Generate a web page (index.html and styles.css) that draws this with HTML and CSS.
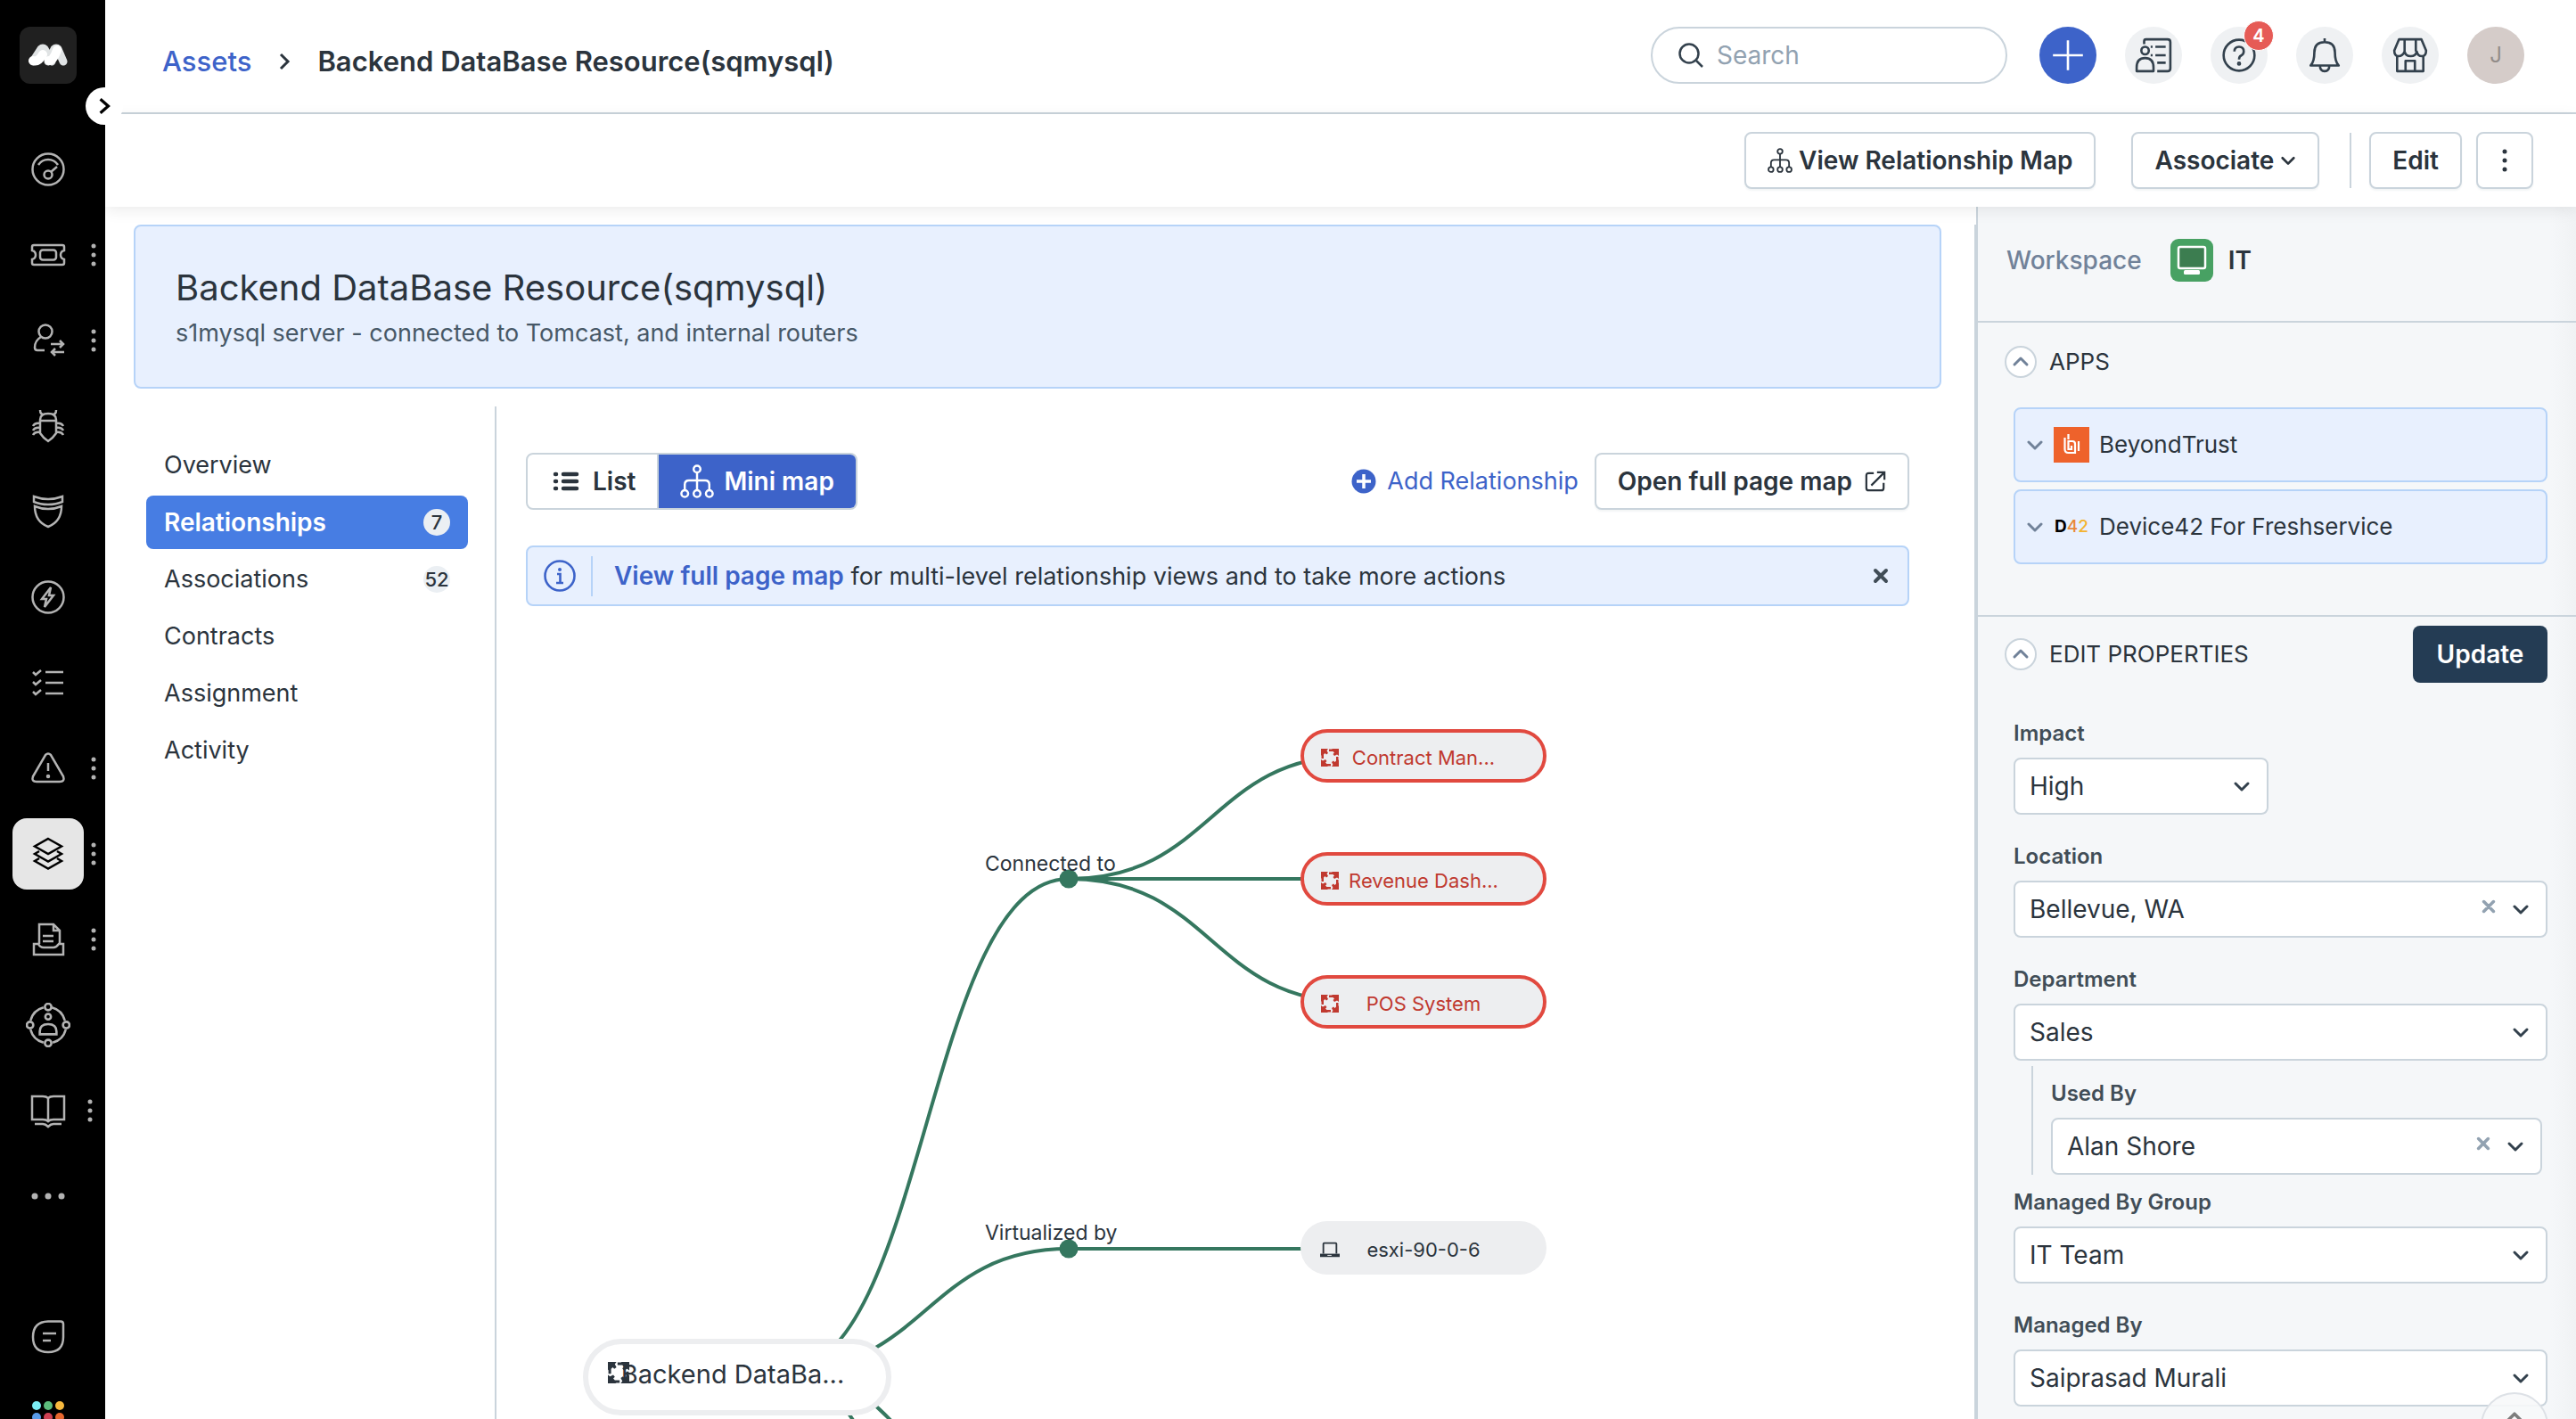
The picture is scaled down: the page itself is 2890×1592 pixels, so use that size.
FILE: index.html
```html
<!DOCTYPE html>
<html lang="en">
<head>
<meta charset="utf-8">
<title>Backend DataBase Resource(sqmysql)</title>
<link rel="stylesheet" href="styles.css">
</head>
<body>
<svg class="defs" aria-hidden="true">
  <symbol id="chev" viewBox="0 0 20 20"><path d="M3 7l7 7 7-7" fill="none" stroke="currentColor" stroke-width="3" stroke-linecap="round" stroke-linejoin="round"/></symbol>
  <symbol id="cross" viewBox="0 0 20 20"><path d="M4 4l12 12M16 4L4 16" fill="none" stroke="currentColor" stroke-width="4" stroke-linecap="round"/></symbol>
  <symbol id="tree" viewBox="0 0 40 40"><g fill="none" stroke="currentColor" stroke-width="2.6"><circle cx="20" cy="5.500" r="4"/><circle cx="5.500" cy="34.500" r="4"/><circle cx="20" cy="34.500" r="4"/><circle cx="34.500" cy="34.500" r="4"/><path d="M20 9.500v21M5.500 30.500V24q0-5 5-5h19q5 0 5 5v6.500"/></g></symbol>
  <symbol id="more" viewBox="0 0 8 28"><g fill="currentColor"><circle cx="4" cy="4" r="2.500"/><circle cx="4" cy="14" r="2.500"/><circle cx="4" cy="24" r="2.500"/></g></symbol>
  <symbol id="cycle" viewBox="0 0 20 20"><g fill="currentColor"><path id="cy" d="M0 0h8L6.500 2 8 5 6 6.500 4.500 5 3 6.500V11H.500V7L0 8z"/><path d="M0 0h8L6.500 2 8 5 6 6.500 4.500 5 3 6.500V11H.500V7L0 8z" transform="rotate(90 10 10)"/><path d="M0 0h8L6.500 2 8 5 6 6.500 4.500 5 3 6.500V11H.500V7L0 8z" transform="rotate(180 10 10)"/><path d="M0 0h8L6.500 2 8 5 6 6.500 4.500 5 3 6.500V11H.500V7L0 8z" transform="rotate(270 10 10)"/></g></symbol>
</svg>
<div class="app">
  <nav class="rail" aria-label="Main">
    <a class="logo" href="#" aria-label="Home"><svg viewBox="0 0 44 26" width="44" height="26"><path d="M5 20L14 6q2-2 4 0l8 14" fill="none" stroke="#e0e3e4" stroke-width="9" stroke-linecap="round" stroke-linejoin="round"/><path d="M22 20L29 6q2-2 4 0l6 14" fill="none" stroke="#e0e3e4" stroke-width="9" stroke-linecap="round" stroke-linejoin="round"/><path d="M5 19q6 2 11-7M23 19q5 0 9-12" fill="none" stroke="#fff" stroke-width="10" stroke-linecap="round"/></svg></a>
    <button class="expand" aria-label="Expand menu"><svg viewBox="0 0 20 20" width="22" height="22"><path d="M6 3l8 7-8 7" fill="none" stroke="#000" stroke-width="3"/></svg></button>
    <ul class="rail-list">
      <li><a href="#" aria-label="Dashboard"><svg viewBox="0 0 40 40"><circle cx="20" cy="20" r="17.500"/><path d="M9 15q4-6 11-6t11 6M23 23l7-6"/><circle cx="20" cy="26" r="4.500"/></svg></a></li>
      <li><a href="#" aria-label="Tickets"><svg viewBox="0 0 40 40"><path d="M4 9h32q2 0 2 2v4q-4 1-4 5t4 5v4q0 2-2 2H4q-2 0-2-2v-4q4-1 4-5t-4-5v-4q0-2 2-2z"/><rect x="11" y="14.500" width="18" height="11" rx="3"/></svg></a><svg class="dots" viewBox="0 0 8 28"><use href="#more"/></svg></li>
      <li><a href="#" aria-label="Requests"><svg viewBox="0 0 40 40"><circle cx="17" cy="10" r="7.500"/><path d="M12 16q-7 4-7 12 0 3 3 3h8M23 24h14m-4-4l4 4-4 4M38 33H24m4-4l-4 4 4 4"/></svg></a><svg class="dots" viewBox="0 0 8 28"><use href="#more"/></svg></li>
      <li><a href="#" aria-label="Problems"><svg viewBox="0 0 40 40"><path d="M11 13q0-7 9-7t9 7v15q-4 6-9 9-5-3-9-9zM11 14h18M11 2q0 5 4 5M29 2q0 5-4 5M11 17q-6-1-8 3M11 22q-6-1-8 3M11 27q-6-1-8 3M29 17q6-1 8 3M29 22q6-1 8 3M29 27q6-1 8 3"/></svg></a></li>
      <li><a href="#" aria-label="Changes"><svg viewBox="0 0 40 40"><path d="M4 3q8 3 16 3t16-3v6q-7 3-16 3T4 9zM5 14q7 3 15 3t15-3q0 17-15 23Q5 31 5 14z"/></svg></a></li>
      <li><a href="#" aria-label="Releases"><svg viewBox="0 0 40 40"><circle cx="20" cy="20" r="17.500"/><path d="M23 9L13 22h5l-2 9 10-13h-5z"/></svg></a></li>
      <li><a href="#" aria-label="Tasks"><svg viewBox="0 0 40 40"><path d="M3 8l3 3 6-5M3 19l3 3 6-5M3 30l3 3 6-5M17 8h20M17 20h20M17 32h20"/></svg></a></li>
      <li><a href="#" aria-label="Alerts"><svg viewBox="0 0 40 40"><path d="M17 5q3-3 6 0l14 24q2 6-4 6H7q-6 0-4-6zM20 14v9"/><circle cx="20" cy="29" r="1"/></svg></a><svg class="dots" viewBox="0 0 8 28"><use href="#more"/></svg></li>
      <li><a class="on" href="#" aria-label="Assets"><svg viewBox="0 0 40 40"><path d="M20 3l15 8.500-15 8.500-15-8.500zM10 17l-5 3 15 8.500L35 20l-5-3M10 25l-5 3 15 8.500L35 28l-5-3"/></svg></a><svg class="dots" viewBox="0 0 8 28"><use href="#more"/></svg></li>
      <li><a href="#" aria-label="Contracts"><svg viewBox="0 0 40 40"><path d="M10 25V3h16l7 7v15M26 3v7h7M14 16h12M14 22h12M9 25H4v12h33V25h-5q-3 4-6 4H15q-4 0-6-4z"/></svg></a><svg class="dots" viewBox="0 0 8 28"><use href="#more"/></svg></li>
      <li><a href="#" aria-label="Workload"><svg class="wide" viewBox="0 0 48 48"><path d="M28 5q11 3 14 14M43 29q-3 11-14 14M19 43Q8 40 5 29M5 19Q8 8 19 5"/><circle cx="24" cy="4.500" r="3.500"/><circle cx="24" cy="43.500" r="3.500"/><circle cx="4.500" cy="24" r="3.500"/><circle cx="43.500" cy="24" r="3.500"/><circle cx="24" cy="15" r="3"/><path d="M15 34v-3q0-8 9-8t9 8v3z"/></svg></a></li>
      <li><a href="#" aria-label="Solutions"><svg viewBox="0 0 40 40"><path d="M2 4h12q4 0 6 2 2-2 6-2h12v26H26q-4 0-6 2-2-2-6-2H2zM20 6v26M5 35h9q3 0 6 3 3-3 6-3h9"/></svg></a><svg class="dots near" viewBox="0 0 8 28"><use href="#more"/></svg></li>
      <li><a href="#" aria-label="More"><svg viewBox="0 0 40 40" class="fill"><circle cx="5" cy="20" r="3.500"/><circle cx="20" cy="20" r="3.500"/><circle cx="35" cy="20" r="3.500"/></svg></a></li>
    </ul>
    <div class="rail-foot">
      <a href="#" aria-label="Chat"><svg viewBox="0 0 40 40"><path d="M20 2.500h14q3 0 3 3V20q0 17-17 17T3 20 20 2.500zM14 16h15M14 24h9"/></svg></a>
      <a href="#" aria-label="Switch product"><svg viewBox="0 0 40 40" class="fill"><g><circle cx="7" cy="7" r="5" fill="#7aecf4"/><circle cx="20" cy="7" r="5" fill="#5dbd7c"/><circle cx="33" cy="7" r="5" fill="#f7b93e"/><circle cx="7" cy="20" r="5" fill="#5a9be8"/><circle cx="20" cy="20" r="5" fill="#cf4154"/><circle cx="33" cy="20" r="5" fill="#e8672f"/></g></svg></a>
    </div>
  </nav>

  <div class="page">
    <header class="top">
      <nav class="crumbs" aria-label="Breadcrumb"><a href="#">Assets</a><svg viewBox="0 0 20 20" width="20" height="20"><path d="M6 2l8 8-8 8" fill="none" stroke="#2b343d" stroke-width="3"/></svg><strong>Backend DataBase Resource(sqmysql)</strong></nav>
      <label class="search"><svg viewBox="0 0 30 30" width="30" height="30"><circle cx="13" cy="13" r="10.500" fill="none" stroke="#33414d" stroke-width="2.500"/><path d="M21 21l7 7" stroke="#33414d" stroke-width="2.500"/></svg><input type="search" placeholder="Search" aria-label="Search"></label>
      <div class="actions">
        <button class="round add" aria-label="New"><svg viewBox="0 0 40 40"><path d="M20 4v32M4 20h32"/></svg></button>
        <button class="round" aria-label="Feed"><svg viewBox="0 0 40 40"><path d="M10 8V5q0-2 2-2h23q3 0 3 3v28q0 3-3 3H24M17 11h2M17 20h2M22 11h11M22 20h11M24 28h9"/><circle cx="11" cy="15" r="4"/><path d="M2 37v-4q0-10 9-10t9 10v4z"/></svg></button>
        <button class="round" aria-label="Help"><svg viewBox="0 0 40 40"><circle cx="20" cy="20" r="16.500"/><path d="M15 16q0-5 5-5t5 5q0 3-3 4.500-2 1-2 4"/><circle cx="20" cy="29" r="1"/></svg><span class="count">4</span></button>
        <button class="round" aria-label="Notifications"><svg viewBox="0 0 40 40"><path d="M20 2v4M5 31q4-4 4-14Q9 6 20 6t11 11q0 10 4 14zM15 31q0 6 5 6t5-6"/></svg></button>
        <button class="round" aria-label="Marketplace"><svg viewBox="0 0 40 40"><path d="M8 3h24l5 12q0 6-4.500 6T27 16q-1 5-6.500 5T14 16q-2 5-6.500 5T3 15zM14 3v13M26 3v13M6 21v16h28V21M15 37V26h10v11"/></svg></button>
        <button class="round avatar">J</button>
      </div>
    </header>
    <div class="tools">
      <button class="btn map-btn"><svg width="28" height="28"><use href="#tree"/></svg>View Relationship Map</button>
      <button class="btn assoc">Associate<svg width="18" height="18"><use href="#chev"/></svg></button>
      <span class="rule"></span>
      <button class="btn">Edit</button>
      <button class="btn kebab" aria-label="More actions"><svg width="8" height="28"><use href="#more"/></svg></button>
    </div>
    <div class="body">
      <main class="main">
        <section class="hero"><h1>Backend DataBase Resource(sqmysql)</h1><p>s1mysql server - connected to Tomcast, and internal routers</p></section>
        <div class="detail">
          <nav class="tabs" aria-label="Asset sections">
            <a href="#">Overview</a>
            <a class="on" href="#">Relationships<span>7</span></a>
            <a href="#">Associations<span>52</span></a>
            <a href="#">Contracts</a>
            <a href="#">Assignment</a>
            <a href="#">Activity</a>
          </nav>
          <section class="content">
            <div class="viewbar">
              <div class="seg">
                <button><svg viewBox="0 0 30 24" width="30" height="24"><path d="M3 4h1M3 12h1M3 20h1M12 4h15M12 12h15M12 20h15" stroke="#2b343d" stroke-width="4.500" stroke-linecap="round"/></svg>List</button>
                <button class="on"><svg width="38" height="38"><use href="#tree"/></svg>Mini map</button>
              </div>
              <a class="addrel" href="#"><svg viewBox="0 0 28 28" width="28" height="28"><circle cx="14" cy="14" r="13.500" fill="#3d63c9"/><path d="M14 6v16M6 14h16" stroke="#fff" stroke-width="3.500"/></svg>Add Relationship</a>
              <button class="btn open">Open full page map<svg viewBox="0 0 26 26" width="24" height="24"><path d="M11 3H5Q2 3 2 6v15q0 3 3 3h15q3 0 3-3v-6M15 2h9v9M24 2L8 18" fill="none" stroke="#2b343d" stroke-width="2.400"/></svg></button>
            </div>
            <div class="note">
              <svg viewBox="0 0 36 36" width="36" height="36"><circle cx="18" cy="18" r="16.500" fill="none" stroke="#3d63c9" stroke-width="2.600"/><circle cx="18" cy="11" r="2" fill="#3d63c9"/><path d="M15 16h3.500v9M14 26h8" fill="none" stroke="#3d63c9" stroke-width="2.600"/></svg>
              <p><a href="#">View full page map</a> for multi-level relationship views and to take more actions</p>
              <button aria-label="Dismiss"><svg width="20" height="20"><use href="#cross"/></svg></button>
            </div>
            <div class="canvas">
              <svg class="links"><g fill="none" stroke="#35775f" stroke-width="4"><path d="M289 858C449 858 449 306 609 306"/><path d="M289 858C449 858 449 721 609 721"/><path d="M289 858C449 858 449 1065 609 1065"/><path d="M289 858C449 858 449 1410 609 1410"/><path d="M609 306C769 306 769 168 929 168"/><path d="M609 306H929"/><path d="M609 306C769 306 769 444 929 444"/><path d="M609 721H929"/></g><circle cx="609" cy="306" r="10.500" fill="#35775f"/><circle cx="609" cy="721" r="10.500" fill="#35775f"/></svg>
              <span class="rel r1">Connected to</span>
              <span class="rel r2">Virtualized by</span>
              <button class="node hot n1"><svg><use href="#cycle"/></svg>Contract Man...</button>
              <button class="node hot n2"><svg><use href="#cycle"/></svg>Revenue Dash...</button>
              <button class="node hot n3"><svg><use href="#cycle"/></svg>POS System</button>
              <button class="node n4"><svg viewBox="0 0 24 20"><path d="M4 15V3q0-1 1-1h14q1 0 1 1v12" fill="none" stroke="#2b343d" stroke-width="2"/><path d="M0 15h24v4H0z" fill="#2b343d"/><path d="M9 17h5" stroke="#fff"/></svg>esxi-90-0-6</button>
              <button class="node root"><svg><use href="#cycle"/></svg>Backend DataBa...</button>
            </div>
          </section>
        </div>
      </main>
      <aside class="side">
        <div class="ws"><span>Workspace</span><svg viewBox="0 0 48 48" width="48" height="48"><rect width="48" height="48" rx="9" fill="#48a163"/><rect x="9" y="9" width="30" height="24" rx="2" fill="#3c7d50" stroke="#fff" stroke-width="2.500"/><rect x="15" y="35" width="18" height="5" rx="1.500" fill="#fff"/></svg><b>IT</b></div>
        <section class="apps">
          <h2><button class="fold" aria-label="Collapse apps"><svg width="20" height="20"><use href="#chev"/></svg></button>APPS</h2>
          <button class="app-row"><svg width="20" height="20"><use href="#chev"/></svg><svg viewBox="0 0 40 40" width="40" height="40"><rect width="40" height="40" fill="#ee622b"/><path d="M16.500 8v6M12.500 12v13q0 4 4 4H24V19q0-3-3-3h-4.500v9H20v-4M28 16v11" fill="none" stroke="#fff" stroke-width="2.200"/></svg>BeyondTrust</button>
          <button class="app-row"><svg width="20" height="20"><use href="#chev"/></svg><span class="d42">D<i>4</i><em>2</em></span>Device42 For Freshservice</button>
        </section>
        <form class="props">
          <h2><button type="button" class="fold" aria-label="Collapse properties"><svg width="20" height="20"><use href="#chev"/></svg></button>EDIT PROPERTIES<button type="button" class="update">Update</button></h2>
          <div class="field short"><label for="impact">Impact</label><div class="ctl"><select id="impact"><option>High</option></select><svg class="arrow"><use href="#chev"/></svg></div></div>
          <div class="field"><label for="loc">Location</label><div class="ctl"><select id="loc"><option>Bellevue, WA</option></select><button type="button" class="clear" aria-label="Clear location"><svg width="18" height="18"><use href="#cross"/></svg></button><svg class="arrow"><use href="#chev"/></svg></div></div>
          <div class="field"><label for="dept">Department</label><div class="ctl"><select id="dept"><option>Sales</option></select><svg class="arrow"><use href="#chev"/></svg></div></div>
          <div class="field nested"><label for="used">Used By</label><div class="ctl"><select id="used"><option>Alan Shore</option></select><button type="button" class="clear" aria-label="Clear user"><svg width="18" height="18"><use href="#cross"/></svg></button><svg class="arrow"><use href="#chev"/></svg></div></div>
          <div class="field"><label for="group">Managed By Group</label><div class="ctl"><select id="group"><option>IT Team</option></select><svg class="arrow"><use href="#chev"/></svg></div></div>
          <div class="field"><label for="mgr">Managed By</label><div class="ctl"><select id="mgr"><option>Saiprasad Murali</option></select><svg class="arrow"><use href="#chev"/></svg></div></div>
        </form>
        <button class="totop" aria-label="Back to top"><svg width="24" height="24"><use href="#chev"/></svg></button>
      </aside>
    </div>
  </div>
</div>
</body>
</html>
```

FILE: styles.css
```css
* { box-sizing: border-box; }
body { margin: 0; font: 28px/36px Inter, "Liberation Sans", sans-serif; color: #2b343d; background: #fff; }
button, input, select { font: inherit; color: inherit; margin: 0; }
button { cursor: pointer; border: 0; background: none; padding: 0; }
a { color: inherit; text-decoration: none; }
h1, h2, p, ul { margin: 0; padding: 0; }
svg { flex: none; }
.defs { position: absolute; width: 0; height: 0; }
.app { display: flex; height: 100vh; overflow: hidden; }

/* Icon rail */
.rail { position: relative; z-index: 3; flex: none; width: 118px; padding: 30px 0 0 14px; background: #000; display: flex; flex-direction: column; }
.logo { width: 64px; height: 64px; margin: 0 0 56px 8px; border-radius: 12px; background: #202020; display: flex; align-items: center; justify-content: center; flex: none; }
.expand { position: absolute; left: 96px; top: 98px; width: 42px; height: 42px; border-radius: 50%; background: #fff; display: flex; align-items: center; justify-content: center; }
.rail-list { list-style: none; display: flex; flex-direction: column; gap: 16px; }
.rail-list li { display: flex; align-items: center; gap: 7px; height: 80px; }
.rail-list a, .rail-foot a { width: 80px; height: 80px; border-radius: 16px; display: flex; align-items: center; justify-content: center; color: #b3b3b3; flex: none; }
.rail a svg { width: 40px; height: 40px; fill: none; stroke: currentColor; stroke-width: 2.500; }
.rail a.logo svg { width: 44px; height: 26px; }
.rail a svg.wide { width: 50px; height: 50px; }
.rail a svg.fill { fill: currentColor; stroke: none; }
.rail-list a.on { background: #e6e6e6; color: #000; }
.dots { width: 8px; height: 28px; color: #b3b3b3; }
.dots.near { margin-left: -4px; }
.rail-foot { margin-top: 78px; display: flex; flex-direction: column; gap: 10px; }

/* Page header */
.page { flex: 1; min-width: 0; display: flex; flex-direction: column; }
.top { flex: none; height: 128px; border-bottom: 2px solid #cad4dc; display: flex; align-items: center; padding: 0 58px 2px 64px; }
.crumbs { flex: 1; display: flex; align-items: center; gap: 27px; padding-top: 14px; font-size: 31px; line-height: 40px; }
.crumbs a { color: #3d63c9; font-weight: 500; }
.crumbs strong { font-weight: 600; }
.search { width: 400px; height: 64px; margin-right: 36px; padding: 0 28px; border: 2px solid #cad4dc; border-radius: 32px; display: flex; align-items: center; gap: 14px; }
.search input { flex: 1; min-width: 0; border: 0; outline: 0; padding: 0; background: none; }
.search input::placeholder { color: #92a2b1; opacity: 1; }
.actions { display: flex; gap: 32px; }
.round { position: relative; width: 64px; height: 64px; border-radius: 50%; background: #eff1f3; display: flex; align-items: center; justify-content: center; color: #33414d; }
.round svg { width: 42px; height: 42px; fill: none; stroke: currentColor; stroke-width: 2.500; stroke-linejoin: round; }
.round.add { background: #3d63c9; color: #fff; }
.round.avatar { background: #d5ccc9; color: #938c89; font-size: 24px; }
.count { position: absolute; left: 37px; top: -7px; width: 34px; height: 34px; border: 1px solid #fff; border-radius: 50%; background: #e65b56; color: #fff; font-size: 20px; line-height: 32px; font-weight: 600; }

.tools { position: relative; z-index: 2; flex: none; height: 104px; padding: 0 48px 0 0; display: flex; align-items: center; justify-content: flex-end; background: #fff; box-shadow: 0 4px 16px rgba(0, 0, 0, .08); }
.btn { height: 64px; padding: 0 24px; border: 2px solid #cad4dc; border-radius: 8px; background: #fff; box-shadow: 0 2px 2px rgba(24, 50, 71, .05); font-weight: 600; display: flex; align-items: center; justify-content: center; white-space: nowrap; }
.map-btn { gap: 7px; }
.assoc { margin-left: 40px; gap: 7px; }
.rule { width: 2px; height: 62px; margin: 0 20px 0 34px; background: #cad4dc; }
.kebab { width: 64px; margin-left: 16px; padding: 0; }

/* Main column */
.body { flex: 1; min-height: 0; display: flex; }
.main { flex: 1; min-width: 0; margin-top: 20px; border-right: 2px solid #cad4dc; display: flex; flex-direction: column; overflow: hidden; }
.hero { flex: none; margin: 0 37px 0 32px; height: 184px; padding: 41px 45px; border: 2px solid #b6d3f8; border-radius: 8px; background: #e8f0fe; }
.hero h1 { font-size: 40px; line-height: 56px; font-weight: 400; }
.hero p { font-size: 27px; line-height: 46px; color: #475867; }
.detail { flex: 1; min-height: 0; margin-top: 20px; display: flex; }
.tabs { flex: none; width: 439px; padding: 36px 30px 0 46px; border-right: 2px solid #cad4dc; display: flex; flex-direction: column; gap: 4px; font-size: 27px; }
.tabs a { height: 60px; padding: 0 20px; border-radius: 8px; display: flex; align-items: center; justify-content: space-between; }
.tabs a.on { background: #477de3; color: #fff; font-size: 28px; font-weight: 600; }
.tabs span { width: 30px; height: 30px; border-radius: 50%; background: #ebeff3; color: #2b343d; font-size: 22px; line-height: 30px; font-weight: 500; display: flex; justify-content: center; }
.content { flex: 1; min-width: 0; padding: 52px 73px 0 33px; }
.viewbar { display: flex; align-items: center; }
.seg { display: flex; height: 64px; border: 2px solid #cad4dc; border-radius: 8px; margin-right: auto; overflow: hidden; }
.seg button { padding: 0 24px 0 28px; font-weight: 600; display: flex; align-items: center; gap: 15px; }
.seg button.on { padding: 0 24px; gap: 11px; background: #3d63c9; color: #fff; border-left: 2px solid #cad4dc; }
.addrel { display: flex; align-items: center; gap: 12px; margin-right: 18px; font-size: 27px; color: #3d63c9; }
.open { gap: 14px; }
.note { height: 68px; margin-top: 40px; padding: 0 20px 0 18px; border: 2px solid #b6d3f8; border-radius: 8px; background: #e8f0fe; display: flex; align-items: center; }
.note p { flex: 1; margin-left: 17px; padding-left: 24px; border-left: 2px solid #b6d3f8; font-size: 27px; line-height: 44px; }
.note a { color: #3d63c9; font-size: 28px; font-weight: 600; }
.note button { display: flex; color: #414d57; }

/* Relationship diagram */
.canvas { position: relative; height: 1400px; }
.links { position: absolute; left: 0; top: 0; width: 100%; height: 100%; }
.rel { position: absolute; left: 515px; font-size: 23px; line-height: 30px; white-space: nowrap; }
.r1 { top: 274px; }
.r2 { top: 688px; }
.node { position: absolute; left: 869px; width: 276px; height: 60px; border-radius: 30px; background: #edeef0; font-size: 22px; padding-top: 4px; white-space: nowrap; }
.node svg { position: absolute; left: 22px; top: 22px; width: 22px; height: 20px; }
.hot { border: 4px solid #e1493f; color: #c0392f; }
.hot svg { left: 18px; top: 18px; }
.n1 { top: 138px; }
.n2 { top: 276px; }
.n3 { top: 414px; }
.n4 { top: 690px; }
.root { left: 64px; top: 822px; width: 346px; height: 86px; border: 6px solid #edeef0; border-radius: 43px; background: #fff; font-size: 29px; padding: 0 10px 6px 0; }
.root svg { left: 22px; top: 20px; width: 24px; height: 24px; }

/* Properties panel */
.side { position: relative; flex: none; width: 673px; border-left: 2px solid #cad4dc; background: linear-gradient(to left, #f0f2f4, #f5f7f9 28px); overflow: hidden; }
.ws { height: 130px; padding: 0 32px 9px; border-bottom: 2px solid #cad4dc; display: flex; align-items: center; }
.ws span { color: #718299; font-weight: 500; margin-right: 32px; }
.ws b { margin-left: 17px; font-weight: 600; }
.side h2 { display: flex; align-items: center; gap: 14px; font-size: 26px; line-height: 36px; font-weight: 400; }
.fold { width: 36px; height: 36px; border: 2px solid #cad4dc; border-radius: 50%; background: #fff; color: #718299; display: flex; align-items: center; justify-content: center; }
.fold svg, .totop svg { transform: rotate(180deg); }
.apps { height: 330px; padding: 26px 32px 0 30px; border-bottom: 2px solid #cad4dc; }
.app-row { height: 84px; margin-top: 8px; padding: 0 12px; border: 2px solid #b6d3f8; border-radius: 8px; background: #e8f0fe; display: flex; align-items: center; gap: 11px; font-size: 26px; }
.apps .app-row { width: calc(100% - 10px); margin-left: 10px; }
.apps h2 + .app-row { margin-top: 33px; }
.app-row svg:first-child { color: #718299; }
.d42 { width: 40px; font-size: 19px; font-weight: 700; color: #000; }
.d42 i { font-style: normal; font-weight: 500; color: #e8873a; }
.d42 em { font-style: normal; font-weight: 500; color: #f3b32e; }
.props { padding: 10px 32px 0 30px; }
.props .update { margin-left: auto; width: 151px; height: 64px; border-radius: 8px; background: #243c54; color: #fff; font-size: 28px; font-weight: 600; }
.field { margin: 0 0 28px 10px; }
.props h2 + .field { margin-top: 38px; }
.field label { display: block; height: 46px; font-size: 24px; line-height: 38px; font-weight: 600; color: #414d57; }
.ctl { position: relative; }
.field select { appearance: none; display: block; width: 100%; height: 64px; padding: 0 16px; border: 2px solid #cad4dc; border-radius: 8px; background: #fff; }
.short .ctl { width: 286px; }
.arrow { position: absolute; right: 20px; top: 22px; width: 20px; height: 20px; color: #33414d; pointer-events: none; }
.clear { position: absolute; right: 57px; top: 20px; display: flex; color: #92a2b1; }
.field:has(+ .nested) { margin-bottom: 6px; }
.nested { margin: 0 6px 12px 30px; padding: 12px 0 0 20px; border-left: 2px solid #cad4dc; }
.totop { position: absolute; left: 564px; top: 1330px; width: 76px; height: 76px; padding-bottom: 14px; border: 2px solid #dde1e6; border-radius: 50%; background: rgba(247, 248, 249, .9); color: #7d7d7d; }
```
